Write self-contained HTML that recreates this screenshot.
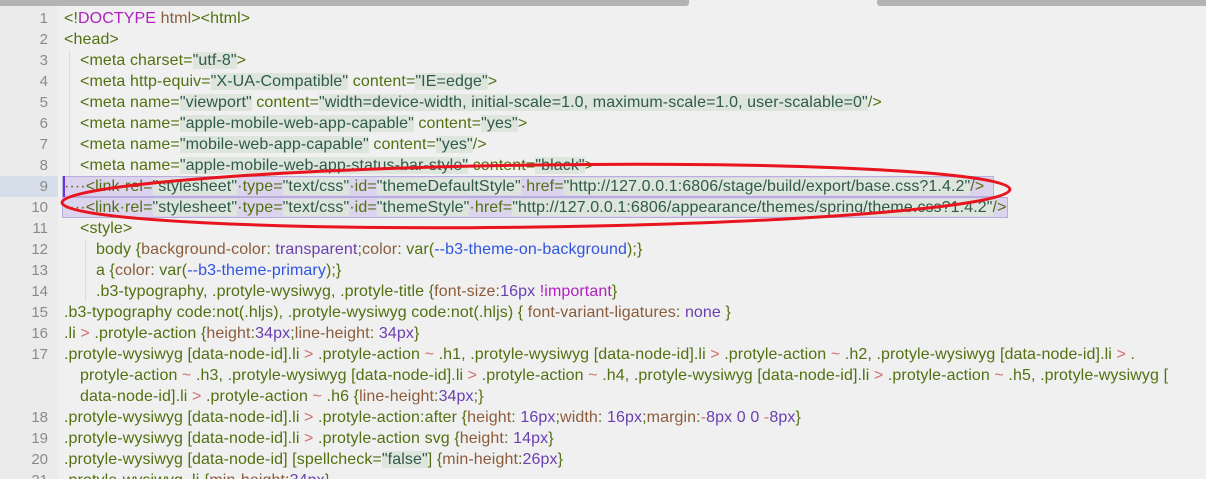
<!DOCTYPE html>
<html><head><meta charset="utf-8">
<style>
html,body{margin:0;padding:0;width:1206px;height:479px;overflow:hidden;background:#f0f0f0;}
body{position:relative;font-family:"Liberation Sans","Noto Sans CJK SC",sans-serif;font-size:16px;letter-spacing:0.1px;}
.gut{position:absolute;left:0;top:0;width:58px;height:479px;background:#ebebeb;}
.bar{position:absolute;top:0;height:6px;background:#b3b3b3;}
.ln{position:absolute;left:0;width:48px;text-align:right;color:#8a8a8a;height:21px;line-height:21px;font-size:15px;letter-spacing:0;}
.l{position:absolute;height:21px;line-height:21px;white-space:pre;color:#527010;}
.s{color:#2f5a4a;background:#dde5dc;}
.k{color:#b020c0}
.p{color:#8b5c3c}
.n{color:#6a3fb0}
.v{color:#2f55e0}
.o{color:#d07070}
.sel{position:absolute;left:62px;height:21px;background:#dcd4ee;border:1px solid #b8aedb;box-sizing:border-box;}
</style></head><body>
<div class="gut"></div>
<div class="bar" style="left:0;width:689px;border-radius:0 0 3px 0"></div>
<div class="bar" style="left:877px;width:329px;border-radius:0 0 0 3px"></div>
<div style="position:absolute;left:0;top:176px;width:58px;height:21px;background:#d6dfe9"></div>
<div class="sel" style="top:176px;width:932px"></div>
<div class="sel" style="top:197px;width:946px"></div>
<div style="position:absolute;left:63px;top:176px;width:2px;height:21px;background:#7030e0"></div>
<div style="position:absolute;left:69px;top:50px;width:1px;height:126px;background:#dcdcdc"></div>
<div style="position:absolute;left:85px;top:239px;width:1px;height:63px;background:#dcdcdc"></div>

<div class="ln" style="top:8px">1</div><div class="ln" style="top:29px">2</div><div class="ln" style="top:50px">3</div><div class="ln" style="top:71px">4</div><div class="ln" style="top:92px">5</div><div class="ln" style="top:113px">6</div><div class="ln" style="top:134px">7</div><div class="ln" style="top:155px">8</div><div class="ln" style="top:176px">9</div><div class="ln" style="top:197px">10</div><div class="ln" style="top:218px">11</div><div class="ln" style="top:239px">12</div><div class="ln" style="top:260px">13</div><div class="ln" style="top:281px">14</div><div class="ln" style="top:302px">15</div><div class="ln" style="top:323px">16</div><div class="ln" style="top:344px">17</div><div class="ln" style="top:407px">18</div><div class="ln" style="top:428px">19</div><div class="ln" style="top:449px">20</div><div class="ln" style="top:470px">21</div>

<div class="l" style="left:64px;top:8px">&lt;!<span class="k">DOCTYPE</span> <span class="p">html</span>&gt;&lt;html&gt;</div>
<div class="l" style="left:64px;top:29px">&lt;head&gt;</div>
<div class="l" style="left:80px;top:50px">&lt;meta charset=<span class="s">"utf-8"</span>&gt;</div>
<div class="l" style="left:80px;top:71px">&lt;meta http-equiv=<span class="s">"X-UA-Compatible"</span> content=<span class="s">"IE=edge"</span>&gt;</div>
<div class="l" style="left:80px;top:92px">&lt;meta name=<span class="s">"viewport"</span> content=<span class="s">"width=device-width, initial-scale=1.0, maximum-scale=1.0, user-scalable=0"</span>/&gt;</div>
<div class="l" style="left:80px;top:113px">&lt;meta name=<span class="s">"apple-mobile-web-app-capable"</span> content=<span class="s">"yes"</span>&gt;</div>
<div class="l" style="left:80px;top:134px">&lt;meta name=<span class="s">"mobile-web-app-capable"</span> content=<span class="s">"yes"</span>/&gt;</div>
<div class="l" style="left:80px;top:155px">&lt;meta name=<span class="s">"apple-mobile-web-app-status-bar-style"</span> content=<span class="s">"black"</span>&gt;</div>
<div class="l" style="left:64px;top:176px">····&lt;link·rel=<span class="s">"stylesheet"</span>·type=<span class="s">"text/css"</span>·id=<span class="s">"themeDefaultStyle"</span>·href=<span class="s">"http://127.0.0.1:6806/stage/build/export/base.css?1.4.2"</span>/&gt;</div>
<div class="l" style="left:64px;top:197px">····&lt;link·rel=<span class="s">"stylesheet"</span>·type=<span class="s">"text/css"</span>·id=<span class="s">"themeStyle"</span>·href=<span class="s">"http://127.0.0.1:6806/appearance/themes/spring/theme.css?1.4.2"</span>/&gt;</div>
<div class="l" style="left:80px;top:218px">&lt;style&gt;</div>
<div class="l" style="left:96px;top:239px">body {<span class="p">background-color</span>: <span class="n">transparent</span>;<span class="p">color</span>: var(<span class="v">--b3-theme-on-background</span>);}</div>
<div class="l" style="left:96px;top:260px">a {<span class="p">color</span>: var(<span class="v">--b3-theme-primary</span>);}</div>
<div class="l" style="left:96px;top:281px">.b3-typography, .protyle-wysiwyg, .protyle-title {<span class="p">font-size</span>:<span class="n">16px</span> <span class="k">!important</span>}</div>
<div class="l" style="left:64px;top:302px">.b3-typography code:not(.hljs), .protyle-wysiwyg code:not(.hljs) { <span class="p">font-variant-ligatures</span>: <span class="n">none</span> }</div>
<div class="l" style="left:64px;top:323px">.li <span class="o">&gt;</span> .protyle-action {<span class="p">height</span>:<span class="n">34px</span>;<span class="p">line-height</span>: <span class="n">34px</span>}</div>
<div class="l" style="left:64px;top:344px">.protyle-wysiwyg [data-node-id].li <span class="o">&gt;</span> .protyle-action <span class="o">~</span> .h1, .protyle-wysiwyg [data-node-id].li <span class="o">&gt;</span> .protyle-action <span class="o">~</span> .h2, .protyle-wysiwyg [data-node-id].li <span class="o">&gt;</span> .</div>
<div class="l" style="left:80px;top:365px">protyle-action <span class="o">~</span> .h3, .protyle-wysiwyg [data-node-id].li <span class="o">&gt;</span> .protyle-action <span class="o">~</span> .h4, .protyle-wysiwyg [data-node-id].li <span class="o">&gt;</span> .protyle-action <span class="o">~</span> .h5, .protyle-wysiwyg [</div>
<div class="l" style="left:80px;top:386px">data-node-id].li <span class="o">&gt;</span> .protyle-action <span class="o">~</span> .h6 {<span class="p">line-height</span>:<span class="n">34px</span>;}</div>
<div class="l" style="left:64px;top:407px">.protyle-wysiwyg [data-node-id].li <span class="o">&gt;</span> .protyle-action:after {<span class="p">height</span>: <span class="n">16px</span>;<span class="p">width</span>: <span class="n">16px</span>;<span class="p">margin</span>:<span class="n"><span class="o">-</span>8px 0 0 <span class="o">-</span>8px</span>}</div>
<div class="l" style="left:64px;top:428px">.protyle-wysiwyg [data-node-id].li <span class="o">&gt;</span> .protyle-action svg {<span class="p">height</span>: <span class="n">14px</span>}</div>
<div class="l" style="left:64px;top:449px">.protyle-wysiwyg [data-node-id] [spellcheck=<span class="s">"false"</span>] {<span class="p">min-height</span>:<span class="n">26px</span>}</div>
<div class="l" style="left:64px;top:470px">.protyle-wysiwyg .li {<span class="p">min-height</span>:<span class="n">34px</span>}</div>

<svg style="position:absolute;left:0;top:0" width="1206" height="479">
<ellipse cx="536" cy="196" rx="474" ry="31" transform="rotate(-0.8 536 196)" fill="none" stroke="#e8141e" stroke-width="3"/>
</svg>
</body></html>
